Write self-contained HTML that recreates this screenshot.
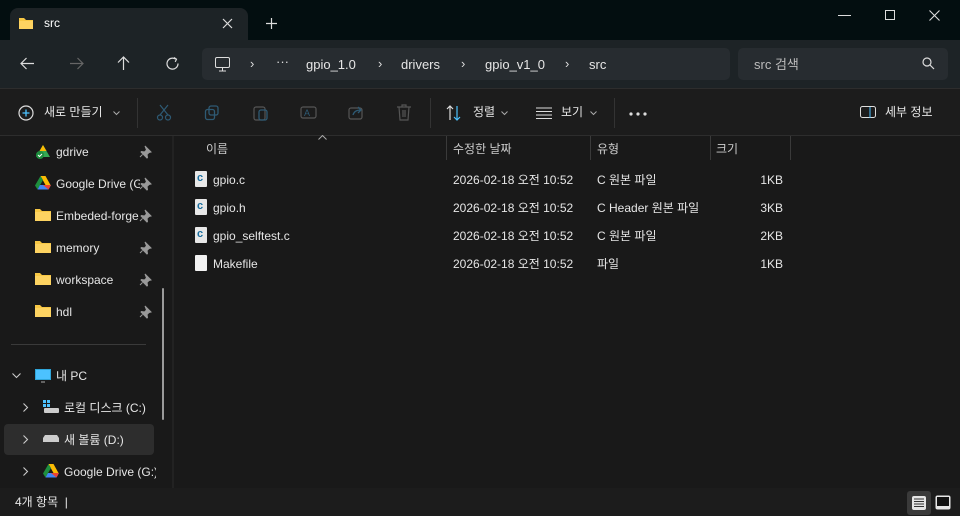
<!DOCTYPE html>
<html><head><meta charset="utf-8"><style>
*{margin:0;padding:0;box-sizing:border-box}
body{width:960px;height:516px;background:#191919;font-family:"Liberation Sans","Noto Sans CJK KR",sans-serif;color:#e6e6e6;font-size:12px;line-height:15px;position:relative;overflow:hidden}
.a{position:absolute;white-space:nowrap;line-height:15px}
svg{position:absolute}
</style></head><body>
<div class="a" style="left:0;top:0;width:960px;height:40px;background:#030e10"></div>
<div class="a" style="left:10px;top:8px;width:238px;height:34px;background:#1d2326;border-radius:8px 8px 0 0"></div>
<svg style="left:18px;top:16px" width="16" height="14"><path d="M1 2h5l2 2h7v9H1z" fill="#f7c744"/><path d="M1 5h14v8H1z" fill="#fdd361"/></svg>
<div class="a" style="left:44px;top:16px;font-size:12px;color:#fff">src</div>
<svg style="left:222px;top:18px" width="11" height="11"><path d="M1 1l9 9M10 1l-9 9" stroke="#ddd" stroke-width="1.2"/></svg>
<svg style="left:266px;top:18px" width="11" height="11"><path d="M5.5 0v11M0 5.5h11" stroke="#ddd" stroke-width="1.2"/></svg>
<div class="a" style="left:838px;top:15px;width:13px;height:1px;background:#ddd"></div>
<div class="a" style="left:885px;top:10px;width:10px;height:10px;border:1px solid #ddd"></div>
<svg style="left:929px;top:10px" width="11" height="11"><path d="M0.5 0.5l10 10M10.5 0.5l-10 10" stroke="#ddd" stroke-width="1.1"/></svg>
<div class="a" style="left:0;top:40px;width:960px;height:48px;background:#1d2326"></div>
<svg style="left:20px;top:57px" width="15" height="13"><path d="M14 6.5H1M6.5 1L1 6.5 6.5 12" fill="none" stroke="#ddd" stroke-width="1.2"/></svg>
<svg style="left:69px;top:57px" width="15" height="13"><path d="M1 6.5h13M8.5 1L14 6.5 8.5 12" fill="none" stroke="#666" stroke-width="1.2"/></svg>
<svg style="left:117px;top:56px" width="13" height="15"><path d="M6.5 14V1M1 6.5L6.5 1 12 6.5" fill="none" stroke="#ddd" stroke-width="1.2"/></svg>
<svg style="left:165px;top:56px" width="15" height="15"><path d="M13 7.5A5.5 5.5 0 1 1 10.5 3" fill="none" stroke="#ddd" stroke-width="1.2"/><path d="M9 1.5l2.5 1.7-1.3 2.7" fill="none" stroke="#ddd" stroke-width="1.2"/></svg>
<div class="a" style="left:202px;top:48px;width:528px;height:32px;background:#272c30;border-radius:5px"></div>
<svg style="left:214px;top:56px" width="18" height="17"><rect x="1.5" y="1.5" width="14" height="10" rx="1.5" fill="none" stroke="#ddd"/><path d="M8.5 12v3M5 15h7" stroke="#ddd"/></svg>
<div class="a" style="left:250px;top:56px;font-size:13px;color:#ddd">›</div>
<div class="a" style="left:276px;top:54px;font-size:13px;color:#ddd">···</div>
<div class="a" style="left:306px;top:57px;font-size:13px">gpio_1.0</div>
<div class="a" style="left:378px;top:56px;font-size:13px;color:#ddd">›</div>
<div class="a" style="left:401px;top:57px;font-size:13px">drivers</div>
<div class="a" style="left:461px;top:56px;font-size:13px;color:#ddd">›</div>
<div class="a" style="left:485px;top:57px;font-size:13px">gpio_v1_0</div>
<div class="a" style="left:565px;top:56px;font-size:13px;color:#ddd">›</div>
<div class="a" style="left:589px;top:57px;font-size:13px">src</div>
<div class="a" style="left:738px;top:48px;width:210px;height:32px;background:#272c30;border-radius:5px"></div>
<div class="a" style="left:754px;top:57px;font-size:13px;color:#bbb">src 검색</div>
<svg style="left:922px;top:57px" width="13" height="13"><circle cx="5" cy="5" r="4" fill="none" stroke="#ddd" stroke-width="1.2"/><path d="M8 8l4 4" stroke="#ddd" stroke-width="1.2"/></svg>
<div class="a" style="left:0;top:88px;width:960px;height:1px;background:#2d2d2d"></div>
<div class="a" style="left:0;top:89px;width:960px;height:46px;background:#1c1c1c"></div>
<svg style="left:18px;top:105px" width="16" height="16"><circle cx="8" cy="8" r="7" fill="none" stroke="#ddd" stroke-width="1.2"/><path d="M8 4.5v7M4.5 8h7" stroke="#4cc2ff" stroke-width="1.3"/></svg>
<div class="a" style="left:44px;top:105px;font-size:12px">새로 만들기</div>
<svg style="left:113px;top:111px" width="7" height="5"><path d="M0.5 0.5l3 3 3-3" fill="none" stroke="#aaa"/></svg>
<div class="a" style="left:137px;top:98px;width:1px;height:30px;background:#333"></div>
<svg style="left:156px;top:104px" width="16" height="17"><path d="M4 1l8 10M12 1L4 11" stroke="#2e5a74" stroke-width="1.2"/><circle cx="4" cy="13.5" r="2.5" fill="none" stroke="#2e5a74" stroke-width="1.2"/><circle cx="12" cy="13.5" r="2.5" fill="none" stroke="#2e5a74" stroke-width="1.2"/></svg>
<svg style="left:204px;top:105px" width="16" height="16"><rect x="5" y="1" width="9" height="9" rx="2" fill="none" stroke="#2e5a74" stroke-width="1.3"/><rect x="1.5" y="4.5" width="9" height="10" rx="2" fill="none" stroke="#2e5a74" stroke-width="1.3"/></svg>
<svg style="left:253px;top:104px" width="16" height="17"><rect x="1" y="3" width="11" height="13" rx="2" fill="none" stroke="#555" stroke-width="1.2"/><rect x="6" y="6" width="8" height="10" rx="2" fill="none" stroke="#2e5a74" stroke-width="1.3"/></svg>
<svg style="left:300px;top:105px" width="17" height="15"><rect x="1" y="2" width="15" height="11" rx="2" fill="none" stroke="#555" stroke-width="1.2"/><text x="4" y="11" font-size="9" fill="#2e5a74" font-family="Liberation Sans">A</text></svg>
<svg style="left:348px;top:105px" width="16" height="15"><rect x="1" y="3" width="13" height="11" rx="2" fill="none" stroke="#555" stroke-width="1.2"/><path d="M5 10c1-4 4-5 8-5M10 2l3 3-3 3" fill="none" stroke="#2e5a74" stroke-width="1.3"/></svg>
<svg style="left:396px;top:104px" width="16" height="17"><path d="M1 3h14M6 3V1h4v2M3 3l1 13h8l1-13M7 6v7M9 6v7" fill="none" stroke="#555" stroke-width="1.2"/></svg>
<div class="a" style="left:430px;top:98px;width:1px;height:30px;background:#333"></div>
<svg style="left:446px;top:105px" width="16" height="16"><path d="M4 15V1M1 4l3-3 3 3" fill="none" stroke="#ddd" stroke-width="1.2"/><path d="M11 1v14M8 12l3 3 3-3" fill="none" stroke="#4cc2ff" stroke-width="1.2"/></svg>
<div class="a" style="left:473px;top:105px;font-size:12px">정렬</div>
<svg style="left:501px;top:111px" width="7" height="5"><path d="M0.5 0.5l3 3 3-3" fill="none" stroke="#aaa"/></svg>
<svg style="left:536px;top:107px" width="16" height="12"><path d="M0 1h16M0 4.5h16M0 8h16M0 11.5h16" stroke="#ddd"/></svg>
<div class="a" style="left:561px;top:105px;font-size:12px">보기</div>
<svg style="left:590px;top:111px" width="7" height="5"><path d="M0.5 0.5l3 3 3-3" fill="none" stroke="#aaa"/></svg>
<div class="a" style="left:614px;top:98px;width:1px;height:30px;background:#333"></div>
<svg style="left:629px;top:112px" width="18" height="4"><circle cx="2" cy="2" r="1.6" fill="#ddd"/><circle cx="9" cy="2" r="1.6" fill="#ddd"/><circle cx="16" cy="2" r="1.6" fill="#ddd"/></svg>
<svg style="left:860px;top:106px" width="17" height="13"><rect x="0.5" y="0.5" width="15" height="11" rx="2" fill="none" stroke="#ddd"/><path d="M10 1v11" stroke="#4cc2ff"/></svg>
<div class="a" style="left:885px;top:105px;font-size:12px">세부 정보</div>
<div class="a" style="left:0;top:135px;width:960px;height:1px;background:#2d2d2d"></div>
<div class="a" style="left:172px;top:136px;width:2px;height:352px;background:#222"></div>
<div class="a" style="left:162px;top:288px;width:2px;height:132px;background:#9a9a9a;border-radius:1px"></div>
<svg style="left:35px;top:144px" width="16" height="16"><path d="M8 1l7 12H1z" fill="#34a853"/><path d="M8 1l3.5 6H4.5z" fill="#fbbc04"/><circle cx="5" cy="11" r="4" fill="#1e8e3e"/><path d="M3 11l1.5 1.5L7 10" stroke="#fff" fill="none"/></svg>
<div class="a" style="left:56px;top:145px">gdrive</div>
<svg style="left:35px;top:176px" width="16" height="14"><path d="M5.5 0h5l5 9h-5z" fill="#fbbc04"/><path d="M5.5 0L0 9.5l2.5 4 5.5-9.5z" fill="#1e8e3e"/><path d="M2.5 13.5h11l2.5-4.5H5z" fill="#4285f4"/><path d="M8 9h8l-2.5 4.5z" fill="#ea4335"/></svg>
<div class="a" style="left:56px;top:177px;width:84px;overflow:hidden">Google Drive (G:)</div>
<div class="a" style="left:56px;top:209px;width:84px;overflow:hidden">Embeded-forge</div>
<div class="a" style="left:56px;top:241px">memory</div>
<div class="a" style="left:56px;top:273px">workspace</div>
<div class="a" style="left:56px;top:305px">hdl</div>
<svg style="left:35px;top:208px" width="16" height="14"><path d="M0 1h5l2 2h9v10H0z" fill="#f7c744"/><path d="M0 4h16v9H0z" fill="#fdd361"/></svg>
<svg style="left:35px;top:240px" width="16" height="14"><path d="M0 1h5l2 2h9v10H0z" fill="#f7c744"/><path d="M0 4h16v9H0z" fill="#fdd361"/></svg>
<svg style="left:35px;top:272px" width="16" height="14"><path d="M0 1h5l2 2h9v10H0z" fill="#f7c744"/><path d="M0 4h16v9H0z" fill="#fdd361"/></svg>
<svg style="left:35px;top:304px" width="16" height="14"><path d="M0 1h5l2 2h9v10H0z" fill="#f7c744"/><path d="M0 4h16v9H0z" fill="#fdd361"/></svg>
<svg style="left:139px;top:145px" width="13" height="175"><g fill="#999" stroke="#999" stroke-width="1">
<g><path d="M6 1l6 6-2 .5-2 2 .5 3-.5.5-6-6 .5-.5 3 .5 2-2z"/><path d="M3.5 9.5L1 12" fill="none"/></g>
<g transform="translate(0,32)"><path d="M6 1l6 6-2 .5-2 2 .5 3-.5.5-6-6 .5-.5 3 .5 2-2z"/><path d="M3.5 9.5L1 12" fill="none"/></g>
<g transform="translate(0,64)"><path d="M6 1l6 6-2 .5-2 2 .5 3-.5.5-6-6 .5-.5 3 .5 2-2z"/><path d="M3.5 9.5L1 12" fill="none"/></g>
<g transform="translate(0,96)"><path d="M6 1l6 6-2 .5-2 2 .5 3-.5.5-6-6 .5-.5 3 .5 2-2z"/><path d="M3.5 9.5L1 12" fill="none"/></g>
<g transform="translate(0,128)"><path d="M6 1l6 6-2 .5-2 2 .5 3-.5.5-6-6 .5-.5 3 .5 2-2z"/><path d="M3.5 9.5L1 12" fill="none"/></g>
<g transform="translate(0,160)"><path d="M6 1l6 6-2 .5-2 2 .5 3-.5.5-6-6 .5-.5 3 .5 2-2z"/><path d="M3.5 9.5L1 12" fill="none"/></g>
</g></svg>
<div class="a" style="left:11px;top:344px;width:135px;height:1px;background:#3a3a3a"></div>
<svg style="left:12px;top:373px" width="9" height="6"><path d="M0.5 0.5l4 4 4-4" fill="none" stroke="#ccc" stroke-width="1.1"/></svg>
<svg style="left:35px;top:369px" width="16" height="14"><rect x="0" y="0" width="16" height="11" fill="#2fa6da"/><rect x="1" y="1" width="14" height="9" fill="#4cc2ff"/><path d="M6 13h4" stroke="#aaa"/></svg>
<div class="a" style="left:56px;top:369px">내 PC</div>
<svg style="left:23px;top:403px" width="6" height="9"><path d="M0.5 0.5l4 4-4 4" fill="none" stroke="#ccc" stroke-width="1.1"/></svg>
<svg style="left:43px;top:400px" width="16" height="14"><rect x="0" y="0" width="3" height="3" fill="#4cc2ff"/><rect x="4" y="0" width="3" height="3" fill="#4cc2ff"/><rect x="0" y="4" width="3" height="3" fill="#4cc2ff"/><rect x="4" y="4" width="3" height="3" fill="#4cc2ff"/><rect x="1" y="8" width="15" height="5" rx="1" fill="#ccc"/></svg>
<div class="a" style="left:64px;top:401px">로컬 디스크 (C:)</div>
<div class="a" style="left:4px;top:424px;width:150px;height:31px;background:#2d2d2d;border-radius:4px"></div>
<svg style="left:23px;top:435px" width="6" height="9"><path d="M0.5 0.5l4 4-4 4" fill="none" stroke="#ccc" stroke-width="1.1"/></svg>
<svg style="left:43px;top:435px" width="16" height="7"><path d="M2 0h12l2 3v4H0V3z" fill="#ccc"/></svg>
<div class="a" style="left:64px;top:433px">새 볼륨 (D:)</div>
<svg style="left:23px;top:467px" width="6" height="9"><path d="M0.5 0.5l4 4-4 4" fill="none" stroke="#ccc" stroke-width="1.1"/></svg>
<svg style="left:43px;top:464px" width="16" height="14"><path d="M5.5 0h5l5 9h-5z" fill="#fbbc04"/><path d="M5.5 0L0 9.5l2.5 4 5.5-9.5z" fill="#1e8e3e"/><path d="M2.5 13.5h11l2.5-4.5H5z" fill="#4285f4"/><path d="M8 9h8l-2.5 4.5z" fill="#ea4335"/></svg>
<div class="a" style="left:64px;top:465px;width:92px;overflow:hidden">Google Drive (G:)</div>
<div class="a" style="left:206px;top:142px;color:#ccc">이름</div>
<svg style="left:318px;top:135px" width="9" height="5"><path d="M0.5 4.5l4-4 4 4" fill="none" stroke="#aaa"/></svg>
<div class="a" style="left:446px;top:136px;width:1px;height:24px;background:#3a3a3a"></div>
<div class="a" style="left:590px;top:136px;width:1px;height:24px;background:#3a3a3a"></div>
<div class="a" style="left:710px;top:136px;width:1px;height:24px;background:#3a3a3a"></div>
<div class="a" style="left:790px;top:136px;width:1px;height:24px;background:#3a3a3a"></div>
<div class="a" style="left:453px;top:142px;color:#ccc">수정한 날짜</div>
<div class="a" style="left:597px;top:142px;color:#ccc">유형</div>
<div class="a" style="left:716px;top:142px;color:#ccc">크기</div>
<div class="a" style="left:195px;top:171px;width:12px;height:16px;background:#e8e8e8;border-radius:1px"></div><div class="a" style="left:197px;top:171px;font-size:11px;color:#1a6fa0;font-weight:bold">c</div>
<div class="a" style="left:195px;top:199px;width:12px;height:16px;background:#e8e8e8;border-radius:1px"></div><div class="a" style="left:197px;top:199px;font-size:11px;color:#1a6fa0;font-weight:bold">c</div>
<div class="a" style="left:195px;top:227px;width:12px;height:16px;background:#e8e8e8;border-radius:1px"></div><div class="a" style="left:197px;top:227px;font-size:11px;color:#1a6fa0;font-weight:bold">c</div>
<div class="a" style="left:195px;top:255px;width:12px;height:16px;background:#f2f2f2;border-radius:1px"></div>
<div class="a" style="left:213px;top:173px">gpio.c</div>
<div class="a" style="left:213px;top:201px">gpio.h</div>
<div class="a" style="left:213px;top:229px">gpio_selftest.c</div>
<div class="a" style="left:213px;top:257px">Makefile</div>
<div class="a" style="left:453px;top:173px">2026-02-18 오전 10:52</div>
<div class="a" style="left:453px;top:201px">2026-02-18 오전 10:52</div>
<div class="a" style="left:453px;top:229px">2026-02-18 오전 10:52</div>
<div class="a" style="left:453px;top:257px">2026-02-18 오전 10:52</div>
<div class="a" style="left:597px;top:173px">C 원본 파일</div>
<div class="a" style="left:597px;top:201px">C Header 원본 파일</div>
<div class="a" style="left:597px;top:229px">C 원본 파일</div>
<div class="a" style="left:597px;top:257px">파일</div>
<div class="a" style="left:740px;top:173px;width:43px;text-align:right">1KB</div>
<div class="a" style="left:740px;top:201px;width:43px;text-align:right">3KB</div>
<div class="a" style="left:740px;top:229px;width:43px;text-align:right">2KB</div>
<div class="a" style="left:740px;top:257px;width:43px;text-align:right">1KB</div>
<div class="a" style="left:0;top:488px;width:960px;height:28px;background:#1c1c1c"></div>
<div class="a" style="left:15px;top:495px;font-size:12px">4개 항목 &nbsp;|</div>
<div class="a" style="left:907px;top:491px;width:24px;height:24px;background:#3a3a3a;border-radius:3px"></div>
<svg style="left:912px;top:496px" width="14" height="14"><rect width="14" height="14" rx="2" fill="#e6e6e6"/><path d="M2 3h10M2 5.5h10M2 8h10M2 10.5h10" stroke="#333"/></svg>
<svg style="left:935px;top:495px" width="16" height="16"><rect x="0.5" y="0.5" width="15" height="14" rx="2" fill="#e6e6e6"/><rect x="2" y="2" width="12" height="9" fill="#111"/></svg>
</body></html>
